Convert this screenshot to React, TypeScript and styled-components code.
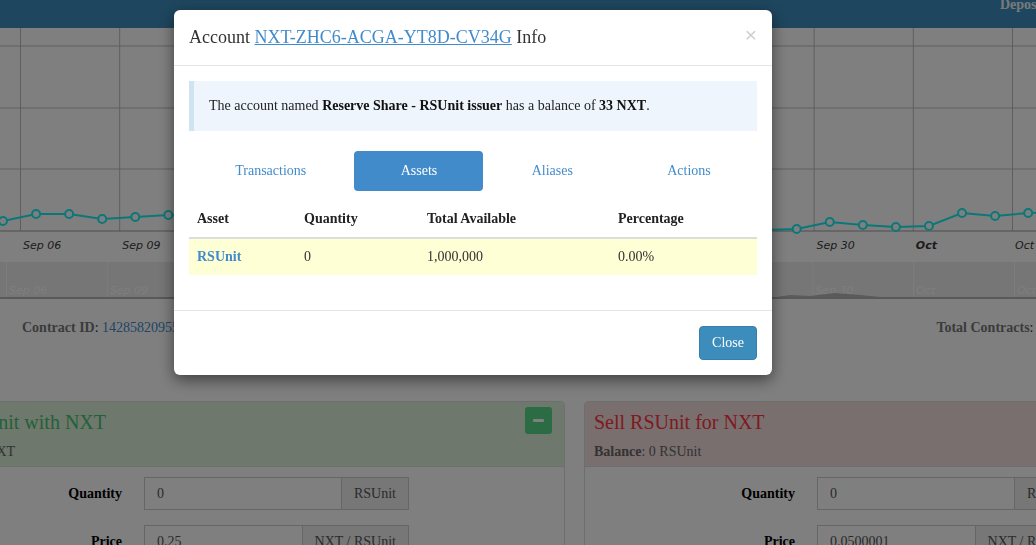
import React from "react";
import styled, { createGlobalStyle, css } from "styled-components";

const GlobalStyle = createGlobalStyle`
  html, body {
    margin: 0;
    padding: 0;
    background: #fff;
    overflow: hidden;
  }
  body {
    font-family: "Liberation Serif", "Times New Roman", serif;
    font-size: 14px;
    line-height: 20px;
    color: #333;
  }
  * {
    box-sizing: border-box;
  }
`;

const Page = styled.div`
  width: 1036px;
  height: 545px;
  overflow: hidden;
`;

const TopBar = styled.header`
  display: flex;
  justify-content: flex-end;
  height: 28px;
  background: #3c8dbc;
`;

const NavItem = styled.a`
  margin-right: -9px;
  font-weight: bold;
  font-size: 14px;
  line-height: 10px;
  color: #f0f4f8;
  white-space: nowrap;
`;

const ChartBox = styled.div`
  height: 272px;

  svg {
    display: block;
  }
`;

const InfoRow = styled.div`
  display: flex;
  align-items: center;
  padding: 18px 0 63px 22px;
  white-space: nowrap;
`;

const InfoItem = styled.div<{ $end?: boolean }>`
  ${({ $end }) =>
    $end &&
    css`
      margin-left: auto;
      margin-right: -8px;
    `}
`;

const InfoLabel = styled.b`
  color: #777;
`;

const Link = styled.a`
  color: #428bca;
  text-decoration: none;
`;

const PanelRow = styled.div`
  display: flex;
  gap: 19px;
  margin-left: -89px;
  width: 1327px;
`;

const tones = {
  buy: { bg: "#dff0d8", title: "#45c474" },
  sell: { bg: "#f2dede", title: "#ff3440" },
};

const Panel = styled.section`
  flex: 0 0 654px;
  height: 200px;
  border: 1px solid #ddd;
  border-radius: 4px;
  background: #fff;
`;

const PanelHeading = styled.div<{ $tone: keyof typeof tones }>`
  display: flex;
  justify-content: space-between;
  align-items: flex-start;
  padding: 9px 12px 4px 9px;
  height: 65px;
  background: ${({ $tone }) => tones[$tone].bg};
  border-bottom: 1px solid #ddd;
  border-radius: 3px 3px 0 0;
`;

const PanelTitle = styled.h3<{ $tone: keyof typeof tones }>`
  margin: 0;
  font-size: 20px;
  line-height: 22px;
  font-weight: normal;
  color: ${({ $tone }) => tones[$tone].title};
  white-space: nowrap;
`;

const PanelSub = styled.div`
  margin-top: 9px;
  color: #666;
  white-space: nowrap;
`;

const ToggleButton = styled.button`
  width: 27px;
  height: 27px;
  margin-top: -4px;
  border: none;
  border-radius: 3px;
  background: #56d98a;
  display: flex;
  align-items: center;
  justify-content: center;
  padding: 0;

  &::before {
    content: "";
    width: 11px;
    height: 3px;
    border-radius: 1px;
    background: #fff;
  }
`;

const PanelBody = styled.div`
  display: flex;
  flex-direction: column;
  gap: 15px;
  padding: 10px 15px;
`;

const FormRow = styled.div`
  display: grid;
  grid-template-columns: 195px 265px;
  column-gap: 22px;
  align-items: center;
`;

const FieldLabel = styled.label`
  text-align: right;
  font-weight: bold;
  color: #000;
`;

const InputGroup = styled.div`
  display: flex;
  height: 33px;
  border: 1px solid #ccc;
`;

const Input = styled.div`
  flex: 1;
  padding: 6px 12px;
  color: #555;
`;

const Addon = styled.span`
  padding: 6px 12px;
  background: #eee;
  border-left: 1px solid #ccc;
  color: #555;
  white-space: nowrap;
`;

const Backdrop = styled.div`
  position: fixed;
  inset: 0;
  background: rgba(0, 0, 0, 0.5);
`;

const Modal = styled.div`
  position: fixed;
  top: 10px;
  left: 174px;
  width: 598px;
  background: #fff;
  border-radius: 6px;
  box-shadow: 0 5px 15px rgba(0, 0, 0, 0.5);
`;

const ModalHeader = styled.div`
  display: flex;
  justify-content: space-between;
  align-items: center;
  padding: 15px;
  border-bottom: 1px solid #e5e5e5;
`;

const ModalTitle = styled.h4`
  margin: 0;
  font-size: 18px;
  line-height: 25px;
  font-weight: normal;
  color: #333;

  a {
    color: #428bca;
    text-decoration: underline;
  }
`;

const CloseX = styled.button`
  border: none;
  background: none;
  padding: 0;
  margin-top: -6px;
  font-family: "Liberation Sans", Arial, sans-serif;
  font-size: 21px;
  line-height: 1;
  color: #cfcfcf;
`;

const ModalBody = styled.div`
  padding: 15px;
`;

const Callout = styled.div`
  padding: 15px 15px;
  margin-bottom: 20px;
  background: #eef5fc;
  border-left: 5px solid #d0e3f1;
  color: #222;

  b {
    color: #111;
  }
`;

const Pills = styled.nav`
  display: flex;
  gap: 2px;
`;

const Pill = styled.a<{ $active?: boolean }>`
  flex: 1 1 auto;
  padding: 10px 15px;
  text-align: center;
  border-radius: 4px;
  color: ${({ $active }) => ($active ? "#fff" : "#428bca")};
  background: ${({ $active }) => ($active ? "#428bca" : "transparent")};
`;

const Table = styled.table`
  width: 100%;
  margin: 10px 0 20px;
  border-collapse: collapse;

  th,
  td {
    padding: 8px;
    text-align: left;
    line-height: 20px;
  }

  th {
    color: #222;
    border-bottom: 2px solid #ddd;
  }

  td {
    color: #333;
  }
`;

const HighlightRow = styled.tr`
  background: #ffffd6;
`;

const AssetLink = styled.a`
  font-weight: bold;
  color: #428bca;
`;

const ModalFooter = styled.div`
  display: flex;
  justify-content: flex-end;
  padding: 15px;
  border-top: 1px solid #e5e5e5;
`;

const Button = styled.button`
  padding: 6px 12px;
  font-family: inherit;
  font-size: 14px;
  line-height: 20px;
  color: #fff;
  background: #3c8dbc;
  border: 1px solid #367fa9;
  border-radius: 4px;
`;

// chart data: one point every ~33px
const SERIES = [
  221, 214, 214, 219, 217, 215, 216, 218, 214, 220, 222, 219, 217, 221, 224,
  223, 220, 226, 224, 227, 228, 226, 229, 230, 229, 222, 225, 227, 226, 213,
  216, 213, 212,
];

const LABELS = [
  "Sep 06",
  "Sep 09",
  "Sep 12",
  "Sep 15",
  "Sep 18",
  "Sep 21",
  "Sep 24",
  "Sep 27",
  "Sep 30",
  "Oct",
  "Oct 04",
];

const PriceChart = () => {
  const top = 28;
  const pts = SERIES.map((y, i) => [3 + i * 33.07, y - top]);
  const line = pts.map(([x, y]) => `${x.toFixed(1)},${y}`).join(" ");
  return (
    <ChartBox>
      <svg width="1036" height="272" viewBox="0 0 1036 272">
        {[18, 80, 141].map((y) => (
          <line key={y} x1="0" x2="1036" y1={y} y2={y} stroke="#bdbdbd" />
        ))}
        {LABELS.map((_, i) => (
          <line
            key={i}
            x1={20.5 + i * 99.2}
            x2={20.5 + i * 99.2}
            y1="0"
            y2="203"
            stroke="#bdbdbd"
          />
        ))}
        <line x1="0" x2="1036" y1="203" y2="203" stroke="#9a9a9a" />
        {LABELS.map((l, i) => (
          <text
            key={l}
            x={23 + i * 99.2}
            y="221"
            fontFamily="DejaVu Sans, Verdana, sans-serif"
            fontSize="11"
            fontStyle="italic"
            fontWeight={l === "Oct" ? "bold" : "normal"}
            fill="#3a3a3a"
          >
            {l}
          </text>
        ))}
        <polyline points={line} fill="none" stroke="#19eef2" strokeWidth="2" />
        {pts.map(([x, y], i) => (
          <circle
            key={i}
            cx={x}
            cy={y}
            r="4"
            fill="#fff"
            stroke="#19eef2"
            strokeWidth="2"
          />
        ))}
        {/* navigator */}
        <rect x="0" y="234" width="1036" height="36" fill="#ececec" />
        {LABELS.map((l, i) => (
          <g key={l}>
            <line
              x1={6.5 + i * 100.8}
              x2={6.5 + i * 100.8}
              y1="234"
              y2="270"
              stroke="#fafafa"
            />
            <text
              x={9 + i * 100.8}
              y="266"
              fontFamily="DejaVu Sans, Verdana, sans-serif"
              fontSize="11"
              fontStyle="italic"
              fill="#fff"
              opacity="0.9"
            >
              {l}
            </text>
          </g>
        ))}
        <path
          d="M770 270 L790 267 L810 268 L835 265 L860 267 L880 269 L900 270 Z"
          fill="#b4b4b4"
        />
        <rect x="0" y="269" width="1036" height="2" fill="#b2b2b2" />
      </svg>
    </ChartBox>
  );
};

type TradeProps = {
  tone: "buy" | "sell";
  title: string;
  balance: string;
  unit: string;
  price: string;
  collapsible?: boolean;
};

const TradePanel = ({ tone, title, balance, unit, price, collapsible }: TradeProps) => (
  <Panel>
    <PanelHeading $tone={tone}>
      <div>
        <PanelTitle $tone={tone}>{title}</PanelTitle>
        <PanelSub>
          <b>Balance</b>: {balance}
        </PanelSub>
      </div>
      {collapsible && <ToggleButton aria-label="collapse" />}
    </PanelHeading>
    <PanelBody>
      <FormRow>
        <FieldLabel>Quantity</FieldLabel>
        <InputGroup>
          <Input>0</Input>
          <Addon>{unit}</Addon>
        </InputGroup>
      </FormRow>
      <FormRow>
        <FieldLabel>Price</FieldLabel>
        <InputGroup>
          <Input>{price}</Input>
          <Addon>NXT / {unit}</Addon>
        </InputGroup>
      </FormRow>
    </PanelBody>
  </Panel>
);

export default function App() {
  return (
    <>
      <GlobalStyle />
      <Page>
        <TopBar>
          <NavItem>Deposit</NavItem>
        </TopBar>
        <PriceChart />
        <InfoRow>
          <InfoItem>
            <InfoLabel>Contract ID</InfoLabel>: <Link>14285820955181273049</Link>
          </InfoItem>
          <InfoItem $end>
            <InfoLabel>Total Contracts</InfoLabel>: <Link>1</Link>
          </InfoItem>
        </InfoRow>
        <PanelRow>
          <TradePanel
            tone="buy"
            title="Buy RSUnit with NXT"
            balance="0 NXT"
            unit="RSUnit"
            price="0.25"
            collapsible
          />
          <TradePanel
            tone="sell"
            title="Sell RSUnit for NXT"
            balance="0 RSUnit"
            unit="RSUnit"
            price="0.0500001"
          />
        </PanelRow>
      </Page>
      <Backdrop />
      <Modal role="dialog">
        <ModalHeader>
          <ModalTitle>
            Account <a>NXT-ZHC6-ACGA-YT8D-CV34G</a> Info
          </ModalTitle>
          <CloseX aria-label="close">×</CloseX>
        </ModalHeader>
        <ModalBody>
          <Callout>
            The account named <b>Reserve Share - RSUnit issuer</b> has a balance of{" "}
            <b>33 NXT</b>.
          </Callout>
          <Pills>
            <Pill>Transactions</Pill>
            <Pill $active>Assets</Pill>
            <Pill>Aliases</Pill>
            <Pill>Actions</Pill>
          </Pills>
          <Table>
            <colgroup>
              <col style={{ width: 107 }} />
              <col style={{ width: 123 }} />
              <col style={{ width: 191 }} />
              <col />
            </colgroup>
            <thead>
              <tr>
                <th>Asset</th>
                <th>Quantity</th>
                <th>Total Available</th>
                <th>Percentage</th>
              </tr>
            </thead>
            <tbody>
              <HighlightRow>
                <td>
                  <AssetLink>RSUnit</AssetLink>
                </td>
                <td>0</td>
                <td>1,000,000</td>
                <td>0.00%</td>
              </HighlightRow>
            </tbody>
          </Table>
        </ModalBody>
        <ModalFooter>
          <Button>Close</Button>
        </ModalFooter>
      </Modal>
    </>
  );
}
